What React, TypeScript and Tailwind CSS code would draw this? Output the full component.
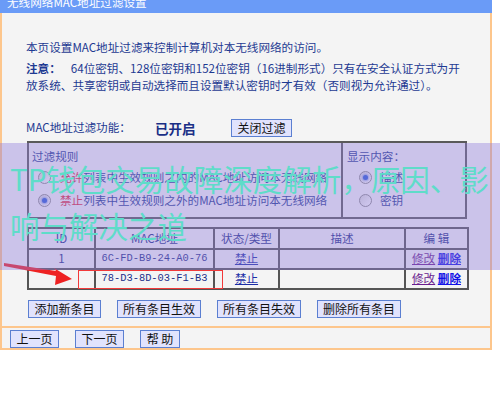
import React from 'react';

const Btn: React.FC<{ label: string; w: string }> = ({ label, w }) => (
  <div className={`${w} h-[18px] flex items-center justify-center border border-[#5b7fd1] bg-[#e1e3fd] text-[12px] leading-none text-[#111] whitespace-nowrap`}>
    {label}
  </div>
);

const Radio: React.FC<{ checked?: boolean }> = ({ checked }) => (
  <div className="w-[13px] h-[13px] shrink-0 rounded-full border border-[#8e8e8e] bg-gradient-to-br from-[#d8d8d8] to-white flex items-center justify-center">
    {checked && <div className="w-[5px] h-[5px] rounded-full bg-[#2a5bd6] shadow-[0_0_2px_1px_rgba(60,100,220,0.5)]" />}
  </div>
);

const cell = 'border-2 border-[#555] p-0 text-center text-[11.6px] text-[#1c2f8a] whitespace-nowrap';
const macCell = 'border-2 border-[#555] p-0 text-center text-[10.4px] text-[#1c2f8a] whitespace-nowrap';

const App: React.FC = () => {
  return (
    <div
      className="relative w-[500px] h-[412px] bg-white overflow-hidden"
      style={{ fontFamily: '"Noto Sans CJK SC", "Noto Sans", sans-serif' }}
    >
      <div className="w-[492px]">
        <div className="h-[13px] bg-[#6a9bf7] overflow-hidden pl-[7px]">
          <div className="text-white text-[11.6px] leading-[12px] -mt-[4px] whitespace-nowrap">无线网络MAC地址过滤设置</div>
        </div>
        <div className="border-l-2 border-r-2 border-b-2 border-[#fdc68c] bg-[#f4f4f4] h-[337px]">
          <div className="pl-[24px] pt-[26px] text-[11.6px] leading-[17px] text-[#1e3a92] whitespace-nowrap">
            <p>本页设置MAC地址过滤来控制计算机对本无线网络的访问。</p>
            <p className="mt-[4px]">
              <span className="font-bold">注意：</span>
              <span className="ml-[10px]">64位密钥、128位密钥和152位密钥（16进制形式）只有在安全认证方式为开</span>
            </p>
            <p>放系统、共享密钥或自动选择而且设置默认密钥时才有效（否则视为允许通过）。</p>
          </div>

          <div className="pl-[24px] mt-[25px] flex items-center h-[18px] text-[11.6px] text-[#1e3a92] whitespace-nowrap">
            <span className="w-[129px]">MAC地址过滤功能：</span>
            <span className="w-[76px] font-bold text-[13.5px] text-[#1a2f86]">已开启</span>
            <Btn label="关闭过滤" w="w-[61px]" />
          </div>

          <div className="ml-[25px] mt-[4px] flex h-[78px] text-[11.6px] text-[#1e3a92] whitespace-nowrap">
            <div className="w-[316px] border-2 border-[#5a5a5a] pl-[3px] pt-[5px]">
              <div className="leading-[17px]">过滤规则</div>
              <div className="flex items-center h-[23px] mt-[1px] pl-[6px]">
                <Radio />
                <span className="ml-[9px] text-[#e0283c]">允许</span>
                <span>列表中生效规则之内的MAC地址访问本无线网络</span>
              </div>
              <div className="flex items-center h-[23px] pl-[6px]">
                <Radio checked />
                <span className="ml-[9px] text-[#e0283c]">禁止</span>
                <span>列表中生效规则之外的MAC地址访问本无线网络</span>
              </div>
            </div>
            <div className="w-[124px] border-2 border-l-0 border-[#5a5a5a] pl-[4px] pt-[5px]">
              <div className="leading-[17px]">显示内容：</div>
              <div className="flex items-center h-[23px] mt-[1px] pl-[12px]">
                <Radio checked />
                <span className="ml-[8px]">描述</span>
              </div>
              <div className="flex items-center h-[23px] pl-[12px]">
                <Radio />
                <span className="ml-[8px]">密钥</span>
              </div>
            </div>
          </div>

          <table className="ml-[25px] mt-[8px] w-[440px] border-collapse table-fixed">
            <colgroup>
              <col className="w-[67px]" />
              <col className="w-[119px]" />
              <col className="w-[65px]" />
              <col className="w-[126px]" />
              <col className="w-[63px]" />
            </colgroup>
            <tbody>
              <tr className="h-[21px] bg-[#f4f4f4]">
                <td className={cell}>ID</td>
                <td className={cell}>MAC地址</td>
                <td className={cell}>状态/类型</td>
                <td className={cell}>描述</td>
                <td className={cell}>编 辑</td>
              </tr>
              <tr className="h-[20px] bg-[#f4f4f4]">
                <td className={cell}>1</td>
                <td className={macCell} style={{ fontFamily: '"Liberation Mono", monospace' }}>6C-FD-B9-24-A0-76</td>
                <td className={cell}><span className="underline text-[#1b2ea6]">禁止</span></td>
                <td className={cell}></td>
                <td className={cell}>
                  <span className="underline text-[#6b1d8f]">修改</span>{' '}
                  <span className="underline text-[#1212e6] font-bold">删除</span>
                </td>
              </tr>
              <tr className="h-[20px] bg-[#f4f4f4]">
                <td className={cell}></td>
                <td className={macCell} style={{ fontFamily: '"Liberation Mono", monospace' }}>78-D3-8D-03-F1-B3</td>
                <td className={cell}><span className="underline text-[#1b2ea6]">禁止</span></td>
                <td className={cell}></td>
                <td className={cell}>
                  <span className="underline text-[#6b1d8f]">修改</span>{' '}
                  <span className="underline text-[#1212e6] font-bold">删除</span>
                </td>
              </tr>
            </tbody>
          </table>

          <div className="ml-[26px] mt-[10px] flex gap-[16px]">
            <Btn label="添加新条目" w="w-[73px]" />
            <Btn label="所有条目生效" w="w-[84px]" />
            <Btn label="所有条目失效" w="w-[84px]" />
            <Btn label="删除所有条目" w="w-[84px]" />
          </div>

          <div className="mt-[8px] border-t-2 border-[#fdc68c] pt-[2px] pl-[8px] flex gap-[16px]">
            <Btn label="上一页" w="w-[49px]" />
            <Btn label="下一页" w="w-[49px]" />
            <Btn label="帮 助" w="w-[40px]" />
          </div>
        </div>
      </div>

      {/* red marker around second MAC */}
      <div className="absolute left-[78px] top-[270px] w-[145px] h-[19px] border border-[#f23a3a]" />
      <svg className="absolute left-0 top-[258px]" width="80" height="32" viewBox="0 258 80 32">
        <polygon points="4,263 56,271 54,268 72,279 55,285 56,276 4,266" fill="#ee2222" />
      </svg>

      {/* translucent banner */}
      <div className="absolute left-0 top-[143px] w-[500px] h-[127px] bg-[rgba(146,126,219,0.42)]">
        <div className="absolute left-[10px] top-[12px] w-[482px] text-[29.5px] leading-[47px] text-[#5fdcc9]">
          TP钱包交易故障深度解析，原因、影响与解决之道
        </div>
      </div>
    </div>
  );
};

export default App;
